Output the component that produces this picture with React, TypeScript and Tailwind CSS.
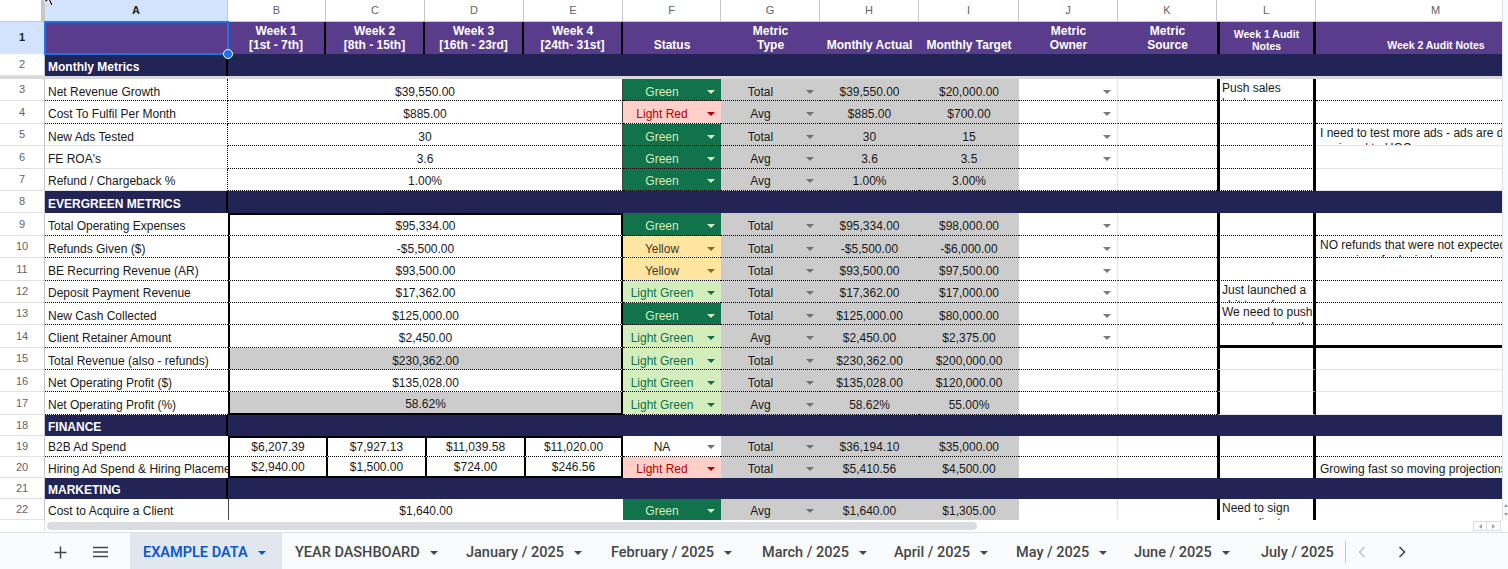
import React from "react";

const FONT = "font-['Liberation_Sans',Arial,Helvetica,sans-serif]";
const TAB_FONT = "font-['Roboto','Noto_Sans',Arial,sans-serif]";

const DOT = "border-b border-b-black [border-bottom-style:dotted]";
const GRY = "border-b border-b-[#e2e2e2]";
const GRAYBG = "bg-[#cccccc]";
const TXT = "text-[12px] leading-[14px] text-[#1a1a1a]";
const PURPLE = "bg-[#593c8c]";
const NAVY = "bg-[#222456]";

const R3 = "h-[22.4px]";
const R2 = "h-[21px]";

type Status = "Green" | "Light Red" | "Yellow" | "Light Green" | "NA";
const ST: Record<Status, { bg: string; fg: string; ar: string }> = {
  Green: { bg: "bg-[#11734b]", fg: "text-[#d4edbc]", ar: "#d4edbc" },
  "Light Red": { bg: "bg-[#ffcfc9]", fg: "text-[#b10202]", ar: "#b10202" },
  Yellow: { bg: "bg-[#ffe5a0]", fg: "text-[#473821]", ar: "#8a6d1c" },
  "Light Green": { bg: "bg-[#d4edbc]", fg: "text-[#11734b]", ar: "#11734b" },
  NA: { bg: "bg-white", fg: "text-[#1a1a1a]", ar: "#707070" },
};

function Tri({ color, cls = "" }: { color: string; cls?: string }) {
  return (
    <svg width="8" height="4" viewBox="0 0 8 4" className={`shrink-0 ${cls}`}>
      <path d="M0 0H8L4 4Z" fill={color} />
    </svg>
  );
}

function Cell({ w, c = "", children }: { w: string; c?: string; children?: React.ReactNode }) {
  return (
    <div className={`${w} shrink-0 h-full flex items-end pb-[1.5px] overflow-hidden whitespace-nowrap ${TXT} ${c}`}>
      {children}
    </div>
  );
}

function Note({ w, lines, c = "" }: { w: string; lines?: string[]; c?: string }) {
  return (
    <div className={`${w} shrink-0 h-full overflow-hidden text-[12px] leading-[15px] text-[#1a1a1a] ${c}`}>
      <div className="pt-[2px]">
        {lines?.map((t, i) => (
          <div key={i} className="whitespace-nowrap">
            {t}
          </div>
        ))}
      </div>
    </div>
  );
}

function RowNum({ n, sel = false }: { n: number; sel?: boolean }) {
  return (
    <div
      className={`w-[45px] shrink-0 h-full flex items-center justify-center text-[11px] border-r border-r-[#c7c7c7] border-b border-b-[#e2e2e2] ${FONT} ${
        sel ? "bg-[#d3e3fd] text-[#1f1f1f] font-bold" : "bg-white text-[#5f6368]"
      }`}
    >
      {n}
    </div>
  );
}

function ColHeader() {
  const cols: [string, string][] = [
    ["A", "w-[183px]"],
    ["B", "w-[98px]"],
    ["C", "w-[99px]"],
    ["D", "w-[99px]"],
    ["E", "w-[99px]"],
    ["F", "w-[98px]"],
    ["G", "w-[99px]"],
    ["H", "w-[99px]"],
    ["I", "w-[100px]"],
    ["J", "w-[99px]"],
    ["K", "w-[99px]"],
    ["L", "w-[99px]"],
    ["M", "w-[240px]"],
  ];
  return (
    <div className="flex h-[22px] bg-white border-b border-b-[#c7c7c7]">
      <div className="w-[45px] shrink-0 h-full border-r-[4px] border-r-[#c7c7c7] bg-white" />
      {cols.map(([l, w]) => (
        <div
          key={l}
          className={`${w} shrink-0 h-full flex items-center justify-center text-[11px] border-r border-r-[#c7c7c7] ${
            l === "A" ? "bg-[#d3e3fd] font-bold text-[#1f1f1f]" : "text-[#5f6368]"
          }`}
        >
          {l}
        </div>
      ))}
    </div>
  );
}

function HeaderRow() {
  const H = `h-full shrink-0 flex flex-col items-center justify-end ${PURPLE} text-white font-bold text-center whitespace-nowrap`;
  const BIG = "text-[12px] leading-[14px] pb-[2px]";
  return (
    <div className="flex h-[32px]">
      <RowNum n={1} sel />
      <div className={`w-[183px] ${H} ${BIG}`} />
      <div className={`w-[98px] ${H} ${BIG} border-r-2 border-r-black`}>
        <span>Week 1</span>
        <span>[1st - 7th]</span>
      </div>
      <div className={`w-[99px] ${H} ${BIG} border-r-2 border-r-black`}>
        <span>Week 2</span>
        <span>[8th - 15th]</span>
      </div>
      <div className={`w-[99px] ${H} ${BIG} border-r-2 border-r-black`}>
        <span>Week 3</span>
        <span>[16th - 23rd]</span>
      </div>
      <div className={`w-[99px] ${H} ${BIG} border-r-2 border-r-black`}>
        <span>Week 4</span>
        <span>[24th- 31st]</span>
      </div>
      <div className={`w-[98px] ${H} ${BIG}`}>
        <span>Status</span>
      </div>
      <div className={`w-[99px] ${H} ${BIG}`}>
        <span>Metric</span>
        <span>Type</span>
      </div>
      <div className={`w-[99px] ${H} ${BIG}`}>
        <span>Monthly Actual</span>
      </div>
      <div className={`w-[100px] ${H} ${BIG}`}>
        <span>Monthly Target</span>
      </div>
      <div className={`w-[99px] ${H} ${BIG}`}>
        <span>Metric</span>
        <span>Owner</span>
      </div>
      <div className={`w-[99px] ${H} ${BIG}`}>
        <span>Metric</span>
        <span>Source</span>
      </div>
      <div className={`w-[99px] ${H} border-x-[3px] border-x-black text-[10.5px] leading-[12px] pb-[2px]`}>
        <span>Week 1 Audit</span>
        <span>Notes</span>
      </div>
      <div className={`w-[240px] ${H} text-[10.5px] leading-[14px] pb-[2px]`}>
        <span>Week 2 Audit Notes</span>
      </div>
    </div>
  );
}

function SectionRow({ n, label, h }: { n: number; label: string; h: string }) {
  return (
    <div className={`flex ${h}`}>
      <RowNum n={n} />
      <div
        className={`w-[183px] shrink-0 h-full ${NAVY} border-r-2 border-r-black flex items-end pb-[2px] pl-[3px] text-white font-bold text-[12px] leading-[14px] whitespace-nowrap`}
      >
        {label}
      </div>
      <div className={`flex-1 h-full ${NAVY}`} />
    </div>
  );
}

type DR = {
  n: number;
  a: string;
  v?: string;
  vs?: string[];
  st: Status;
  t: string;
  h: string;
  i: string;
  j?: boolean;
  l?: string[];
  m?: string[];
  m1?: string;
  gray?: boolean;
  aB?: string;
  lB?: string;
  mB?: string;
  bB?: string;
  thick?: boolean;
};

type Sec = "mon" | "ever" | "fin" | "mkt";

function DataRow({ r, sec, first = false, last = false, h }: { r: DR; sec: Sec; first?: boolean; last?: boolean; h: string }) {
  const aB = r.aB ?? DOT;
  const lB = r.lB ?? DOT;
  const mB = r.mB ?? DOT;
  const bot = r.bB ?? DOT;
  const st = ST[r.st];

  let be: React.ReactNode;
  if (sec === "mon") {
    be = (
      <Cell w="w-[395px]" c={`justify-center border-r border-r-[#444] ${DOT}`}>
        {r.v}
      </Cell>
    );
  } else if (sec === "ever") {
    be = (
      <Cell
        w="w-[395px]"
        c={`justify-center border-l-2 border-r-2 border-l-black border-r-black ${first ? "border-t-2 border-t-black" : ""} ${
          last ? "border-b-2 border-b-black" : DOT
        } ${r.gray ? GRAYBG : ""}`}
      >
        {r.v}
      </Cell>
    );
  } else if (sec === "fin") {
    be = (
      <>
        {(r.vs ?? []).map((v, k) => (
          <Cell
            key={k}
            w={k === 0 ? "w-[98px]" : "w-[99px]"}
            c={`justify-center border-l-2 border-l-black ${k === 3 ? "border-r-2 border-r-black" : ""} ${
              first ? "border-t-2 border-t-black" : ""
            } ${last ? "border-b-2 border-b-black" : DOT}`}
          >
            {v}
          </Cell>
        ))}
      </>
    );
  } else {
    be = (
      <Cell w="w-[395px]" c="justify-center border-l border-l-[#444]">
        {r.v}
      </Cell>
    );
  }

  return (
    <div className={`flex ${h}`}>
      <RowNum n={r.n} />
      <Cell w="w-[183px]" c={`pl-[3px] ${aB} ${sec === "mon" ? "border-r border-r-black [border-right-style:dotted]" : ""}`}>
        {r.a}
      </Cell>
      {be}
      <Cell w="w-[98px]" c={`${st.bg} ${bot}`}>
        <span className={`flex-1 text-center ${st.fg}`}>{r.st}</span>
        <Tri color={st.ar} cls="mx-[6px] mb-[5px]" />
      </Cell>
      <Cell w="w-[99px]" c={`${GRAYBG} ${bot}`}>
        <span className="flex-1 text-center">{r.t}</span>
        <Tri color="#707070" cls="mx-[6px] mb-[5px]" />
      </Cell>
      <Cell w="w-[99px]" c={`justify-center ${GRAYBG} ${bot}`}>
        {r.h}
      </Cell>
      <Cell w="w-[100px]" c={`justify-center ${GRAYBG} ${bot}`}>
        {r.i}
      </Cell>
      <Cell w="w-[99px]" c={`justify-end border-r border-r-[#e2e2e2] ${bot}`}>
        {r.j && <Tri color="#7a7a7a" cls="mr-[6px] mb-[5px]" />}
      </Cell>
      <Cell w="w-[99px]" c={bot} />
      <Note
        w="w-[99px]"
        lines={r.l}
        c={`border-x-[3px] border-x-black pl-[2px] ${r.thick ? "border-b-[3px] border-b-black" : lB}`}
      />
      {r.m1 ? (
        <Cell w="w-[240px]" c={`pl-[4px] ${mB}`}>
          {r.m1}
        </Cell>
      ) : (
        <Note w="w-[240px]" lines={r.m} c={`pl-[4px] ${r.thick ? "border-b-[3px] border-b-black" : mB}`} />
      )}
    </div>
  );
}

const monthly: DR[] = [
  { n: 3, a: "Net Revenue Growth", v: "$39,550.00", st: "Green", t: "Total", h: "$39,550.00", i: "$20,000.00", j: true, l: ["Push sales", "border"] },
  { n: 4, a: "Cost To Fulfil Per Month", v: "$885.00", st: "Light Red", t: "Avg", h: "$885.00", i: "$700.00", j: true },
  {
    n: 5,
    a: "New Ads Tested",
    v: "30",
    st: "Green",
    t: "Total",
    h: "30",
    i: "15",
    j: true,
    m: ["I need to test more ads - ads are dependent on", "assigned to UGC"],
    aB: GRY,
    mB: GRY,
  },
  { n: 6, a: "FE ROA's", v: "3.6", st: "Green", t: "Avg", h: "3.6", i: "3.5", j: true, aB: GRY, mB: GRY },
  { n: 7, a: "Refund / Chargeback %", v: "1.00%", st: "Green", t: "Avg", h: "1.00%", i: "3.00%", aB: GRY, mB: GRY },
];

const evergreen: DR[] = [
  { n: 9, a: "Total Operating Expenses", v: "$95,334.00", st: "Green", t: "Total", h: "$95,334.00", i: "$98,000.00", j: true },
  {
    n: 10,
    a: "Refunds Given ($)",
    v: "-$5,500.00",
    st: "Yellow",
    t: "Total",
    h: "-$5,500.00",
    i: "-$6,000.00",
    j: true,
    m: ["NO refunds that were not expected -", "were given for logical reasons"],
  },
  { n: 11, a: "BE Recurring Revenue (AR)", v: "$93,500.00", st: "Yellow", t: "Total", h: "$93,500.00", i: "$97,500.00", j: true },
  {
    n: 12,
    a: "Deposit Payment Revenue",
    v: "$17,362.00",
    st: "Light Green",
    t: "Total",
    h: "$17,362.00",
    i: "$17,000.00",
    j: true,
    l: ["Just launched a", "shit ton of new"],
  },
  {
    n: 13,
    a: "New Cash Collected",
    v: "$125,000.00",
    st: "Green",
    t: "Total",
    h: "$125,000.00",
    i: "$80,000.00",
    j: true,
    l: ["We need to push", "more cash on the"],
  },
  { n: 14, a: "Client Retainer Amount", v: "$2,450.00", st: "Light Green", t: "Avg", h: "$2,450.00", i: "$2,375.00", j: true, thick: true },
  {
    n: 15,
    a: "Total Revenue (also - refunds)",
    v: "$230,362.00",
    gray: true,
    st: "Light Green",
    t: "Total",
    h: "$230,362.00",
    i: "$200,000.00",
    lB: GRY,
    mB: GRY,
  },
  { n: 16, a: "Net Operating Profit ($)", v: "$135,028.00", st: "Light Green", t: "Total", h: "$135,028.00", i: "$120,000.00", lB: GRY, mB: GRY },
  { n: 17, a: "Net Operating Profit (%)", v: "58.62%", gray: true, st: "Light Green", t: "Avg", h: "58.62%", i: "55.00%", lB: GRY, mB: GRY },
];

const finance: DR[] = [
  {
    n: 19,
    a: "B2B Ad Spend",
    vs: ["$6,207.39", "$7,927.13", "$11,039.58", "$11,020.00"],
    st: "NA",
    t: "Total",
    h: "$36,194.10",
    i: "$35,000.00",
  },
  {
    n: 20,
    a: "Hiring Ad Spend & Hiring Placements",
    vs: ["$2,940.00", "$1,500.00", "$724.00", "$246.56"],
    st: "Light Red",
    t: "Total",
    h: "$5,410.56",
    i: "$4,500.00",
    m1: "Growing fast so moving projections up",
    aB: "",
    bB: "",
    lB: "",
    mB: "",
  },
];

const marketing: DR[] = [
  {
    n: 22,
    a: "Cost to Acquire a Client",
    v: "$1,640.00",
    st: "Green",
    t: "Avg",
    h: "$1,640.00",
    i: "$1,305.00",
    l: ["Need to sign", "more clients"],
    aB: "",
    bB: "",
    lB: "",
    mB: "",
  },
];

function TabBar() {
  const tabs = [
    { label: "EXAMPLE DATA", w: "w-[152px]", active: true, arrow: true },
    { label: "YEAR DASHBOARD", w: "w-[171px]", arrow: true },
    { label: "January / 2025", w: "w-[145px]", arrow: true },
    { label: "February / 2025", w: "w-[151px]", arrow: true },
    { label: "March / 2025", w: "w-[132px]", arrow: true },
    { label: "April / 2025", w: "w-[122px]", arrow: true },
    { label: "May / 2025", w: "w-[118px]", arrow: true },
    { label: "June / 2025", w: "w-[127px]", arrow: true },
    { label: "July / 2025", w: "w-[97px]", arrow: false },
  ];
  return (
    <div className={`h-[36px] flex items-stretch bg-[#f9fbfd] ${TAB_FONT}`}>
      <div className="w-[130px] shrink-0 flex items-center pl-[40px] pt-[2px]">
        <div className="w-[40px] flex justify-center">
          <svg width="13" height="13" viewBox="0 0 13 13">
            <path d="M6.5 0.5V12.5M0.5 6.5H12.5" stroke="#444746" strokeWidth="1.5" />
          </svg>
        </div>
        <div className="w-[40px] flex justify-center">
          <svg width="15" height="12" viewBox="0 0 15 12">
            <path d="M0 1.5H15M0 6H15M0 10.5H15" stroke="#444746" strokeWidth="1.5" />
          </svg>
        </div>
      </div>
      {tabs.map((t) => (
        <div
          key={t.label}
          className={`${t.w} shrink-0 flex items-center pl-[13px] pt-[3px] gap-[10px] text-[14.5px] whitespace-nowrap ${
            t.active ? "bg-[#e1e7ef] text-[#0b57d0] font-semibold" : "text-[#444746] font-medium"
          }`}
        >
          <span>{t.label}</span>
          {t.arrow && <Tri color={t.active ? "#0b57d0" : "#444746"} />}
        </div>
      ))}
      <div className="w-px h-[22px] self-center mt-[2px] bg-[#c4c7c5]" />
      <div className="flex items-center ml-[12px] pt-[2px]">
        <svg width="8" height="12" viewBox="0 0 8 12">
          <path d="M6.5 1L1.5 6L6.5 11" stroke="#c4c7c5" strokeWidth="1.6" fill="none" />
        </svg>
      </div>
      <div className="flex items-center ml-[32px] pt-[2px]">
        <svg width="8" height="12" viewBox="0 0 8 12">
          <path d="M1.5 1L6.5 6L1.5 11" stroke="#444746" strokeWidth="1.6" fill="none" />
        </svg>
      </div>
    </div>
  );
}

function ScrollRow() {
  return (
    <div className="h-[13px] flex items-start bg-white border-b border-b-[#e0e0e0]">
      <div className="w-[45px] h-full shrink-0 border-r border-r-[#e0e0e0]" />
      <div className="ml-[2px] mt-[2px] w-[930px] h-[8px] rounded-full bg-[#dadce0]" />
      <div className="flex-1" />
      <div className="flex mr-[7px] mt-[1px]">
        <div className="w-[14px] h-[10px] border border-[#dadce0] flex items-center justify-center">
          <svg width="3" height="5" viewBox="0 0 3 5">
            <path d="M3 0V5L0 2.5Z" fill="#9aa0a6" />
          </svg>
        </div>
        <div className="w-[14px] h-[10px] border border-l-0 border-[#dadce0] flex items-center justify-center">
          <svg width="3" height="5" viewBox="0 0 3 5">
            <path d="M0 0V5L3 2.5Z" fill="#9aa0a6" />
          </svg>
        </div>
      </div>
    </div>
  );
}

export default function App() {
  return (
    <div className="w-[1508px] h-[569px] overflow-hidden bg-white flex flex-col">
      <div className="flex h-[520px] relative shrink-0">
        <div className={`w-[1502px] h-full overflow-hidden ${FONT}`}>
          <div className="w-[1556px] flex flex-col">
            <ColHeader />
            <HeaderRow />
            <SectionRow n={2} label="Monthly Metrics" h="h-[22px]" />
            <div className="h-[3px] bg-[#d9d9d9]" />
            {monthly.map((r, k) => (
              <DataRow key={r.n} r={r} sec="mon" first={k === 0} last={k === monthly.length - 1} h={R3} />
            ))}
            <SectionRow n={8} label="EVERGREEN METRICS" h={R3} />
            {evergreen.map((r, k) => (
              <DataRow key={r.n} r={r} sec="ever" first={k === 0} last={k === evergreen.length - 1} h={R3} />
            ))}
            <SectionRow n={18} label="FINANCE" h={R2} />
            {finance.map((r, k) => (
              <DataRow key={r.n} r={r} sec="fin" first={k === 0} last={k === finance.length - 1} h={R2} />
            ))}
            <SectionRow n={21} label="MARKETING" h={R2} />
            {marketing.map((r) => (
              <DataRow key={r.n} r={r} sec="mkt" h={R2} />
            ))}
          </div>
        </div>
        <div className="w-[6px] h-full bg-[#f8f9fa] border-l border-l-[#e0e0e0] flex flex-col justify-end items-center pb-[4px] gap-[6px]">
          <svg width="4" height="3" viewBox="0 0 4 3">
            <path d="M0 3H4L2 0Z" fill="#9aa0a6" />
          </svg>
          <svg width="4" height="3" viewBox="0 0 4 3">
            <path d="M0 0H4L2 3Z" fill="#9aa0a6" />
          </svg>
        </div>
        {/* selection overlay */}
        <div className="absolute left-[44px] top-[21px] w-[185px] h-[34px] border-2 border-[#1a73e8] pointer-events-none" />
        <div className="absolute left-[223px] top-[49px] w-[10px] h-[10px] rounded-full bg-[#1a73e8] border border-white pointer-events-none" />
        {/* mouse cursor */}
        <svg className="absolute left-[44px] top-[-11px]" width="12" height="18" viewBox="0 0 12 18">
          <path d="M1 1V14L4.5 11L7 17L9 16L6.5 10.5H11Z" fill="#000" stroke="#fff" strokeWidth="1" />
        </svg>
      </div>
      <ScrollRow />
      <TabBar />
    </div>
  );
}
